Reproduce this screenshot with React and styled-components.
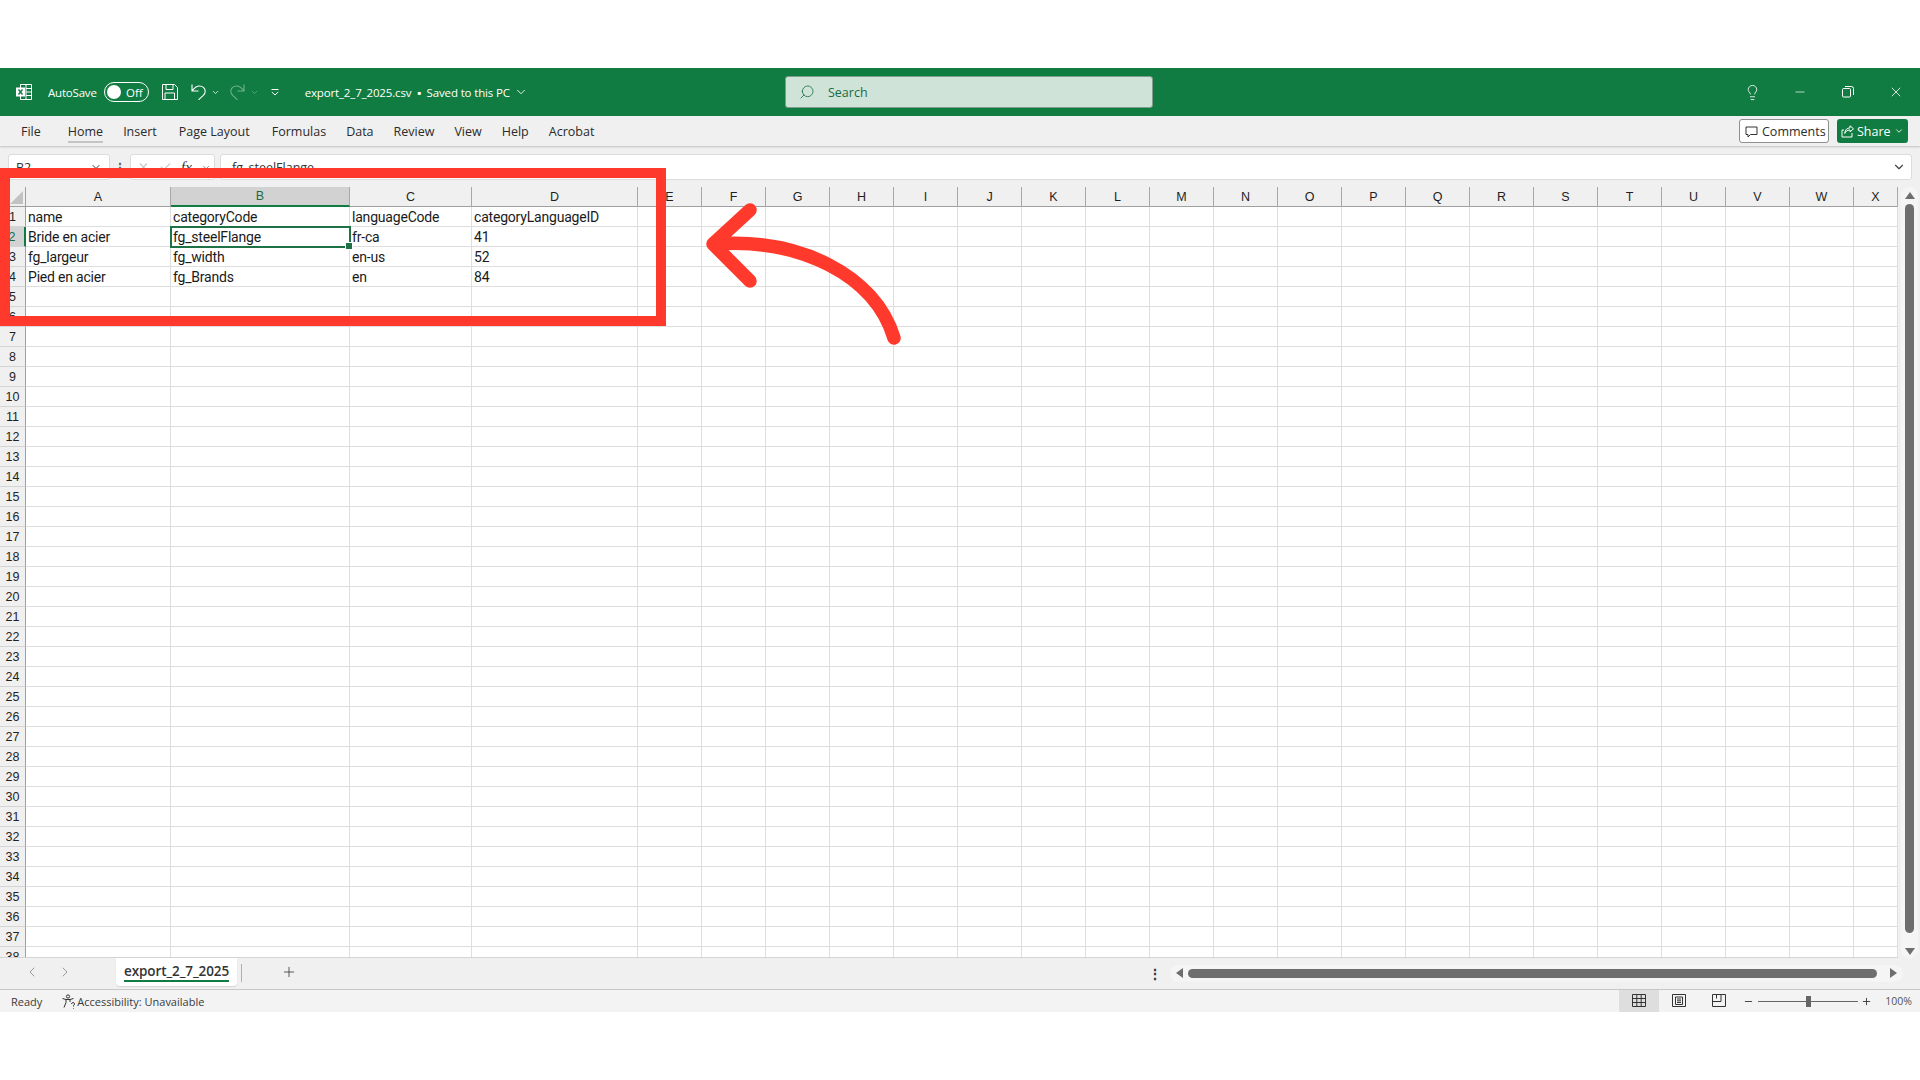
import styled, { createGlobalStyle } from "styled-components";
import { Check, ChevronDown, ChevronLeft, ChevronRight, Lightbulb, Minus, Plus, Search, X } from "lucide-react";

const GlobalStyle = createGlobalStyle`
  * { box-sizing: border-box; }
  html, body { margin: 0; padding: 0; background: #ffffff; }
  body { font-family: "Open Sans", "Noto Sans", sans-serif; }
`;

const GREEN = "#107c41";
const RED = "#ff3a2d";

const Page = styled.div`
  position: relative;
  width: 1920px;
  height: 1080px;
  padding-top: 68px;
  overflow: hidden;
  background: #ffffff;
`;

const Window = styled.div`
  display: flex;
  flex-direction: column;
  height: 944px;
`;

const TitleBar = styled.div`
  display: flex;
  align-items: center;
  height: 48px;
  flex: none;
  padding-left: 16px;
  background: ${GREEN};
  color: #ffffff;
`;

const TitleLeft = styled.div`
  display: flex;
  align-items: center;
  width: 769px;
  flex: none;
`;

const AutoSave = styled.span`
  margin-left: 16px;
  font-size: 11.5px;
  letter-spacing: -0.2px;
`;

const Toggle = styled.span`
  display: flex;
  align-items: center;
  justify-content: space-between;
  width: 45px;
  height: 20px;
  margin-left: 7px;
  padding: 0 5px 0 2px;
  border: 1px solid #ffffff;
  border-radius: 10px;
  font-size: 11.5px;
  &::before {
    content: "";
    width: 14px;
    height: 14px;
    border-radius: 50%;
    background: #ffffff;
  }
`;

const QuickIcon = styled.span`
  display: flex;
  align-items: center;
  gap: ${(p) => p.$inner || 0}px;
  margin-left: ${(p) => p.$gap || 0}px;
  opacity: ${(p) => (p.$dim ? 0.4 : 1)};
`;

const FileName = styled.span`
  display: flex;
  align-items: center;
  gap: 4px;
  margin-left: 26px;
  font-size: 11.5px;
  letter-spacing: -0.15px;
  white-space: nowrap;
`;

const SearchBox = styled.div`
  display: flex;
  align-items: center;
  gap: 13px;
  width: 368px;
  height: 32px;
  padding-left: 13px;
  background: #cfe3d8;
  border: 1px solid #7f9c8c;
  border-radius: 3px;
  color: #1b6b44;
  font-size: 12.5px;
`;

const SearchIcon = styled(Search)`
  transform: scaleX(-1);
`;

const WindowControls = styled.div`
  display: flex;
  align-items: center;
  margin-left: auto;
`;

const ControlIcon = styled.span`
  display: flex;
  justify-content: center;
  width: 48px;
`;

const RestoreIcon = () => (
  <svg width="12" height="12" viewBox="0 0 12 12" fill="none" stroke="#fff" strokeWidth="1">
    <rect x="0.5" y="2.5" width="8" height="8.5" rx="1" />
    <path d="M3 .5h6.5a2 2 0 0 1 2 2V9" />
  </svg>
);

const RibbonBar = styled.div`
  display: flex;
  align-items: center;
  flex: none;
  height: 30px;
  padding: 0 12px 0 21px;
  background: #f0f0f0;
  box-shadow: 0 1px 2px rgba(0, 0, 0, 0.2);
  position: relative;
  font-size: 12.5px;
  color: #2b2b2b;
`;

const TabLabel = styled.span`
  position: relative;
  margin-right: ${(p) => p.$gap}px;
  &::after {
    content: ${(p) => (p.$active ? '""' : "none")};
    position: absolute;
    left: 0;
    right: 0;
    bottom: -3px;
    height: 2px;
    background: #c4c4c4;
  }
`;

const RibbonActions = styled.div`
  display: flex;
  align-items: center;
  gap: 8px;
  margin-left: auto;
`;

const CommentsButton = styled.div`
  display: flex;
  align-items: center;
  gap: 4px;
  width: 90px;
  height: 24px;
  padding-left: 5px;
  background: #ffffff;
  border: 1px solid #8f8f8f;
  border-radius: 3px;
`;

const ShareButton = styled.div`
  display: flex;
  align-items: center;
  gap: 3px;
  width: 71px;
  height: 24px;
  padding-left: 4px;
  background: ${GREEN};
  border-radius: 3px;
  color: #ffffff;
`;

const FormulaBar = styled.div`
  display: flex;
  align-items: center;
  flex: none;
  height: 41px;
  padding: 8px 8px 7px;
  background: #f0f0f0;
`;

const FormulaBox = styled.div`
  display: flex;
  align-items: center;
  height: 26px;
  background: #ffffff;
  border: 1px solid #dcdcdc;
  border-radius: 3px;
  font-size: 12.5px;
  color: #333333;
  width: ${(p) => (p.$width ? `${p.$width}px` : "auto")};
  flex: ${(p) => (p.$width ? "none" : 1)};
  padding: 0 7px;
  justify-content: ${(p) => (p.$between ? "space-between" : "flex-start")};
`;

const FunctionBox = styled(FormulaBox)`
  gap: 9px;
  padding: 0 3px 0 6px;
`;

const FormulaInput = styled(FormulaBox)`
  justify-content: space-between;
  margin-left: 5px;
  padding: 0 5px 0 11px;
`;

const FxLabel = styled.span`
  font-family: "Liberation Serif", serif;
  font-style: italic;
  font-size: 15px;
`;

const Dots = styled.span`
  width: 20px;
  text-align: center;
  font-size: 12px;
  font-weight: 700;
  color: #555555;
`;

const GridArea = styled.div`
  display: flex;
  flex: 1;
  min-height: 0;
  background: #f0f0f0;
`;

const Sheet = styled.div`
  display: grid;
  grid-template-columns: 26px 145px 179px 122px 166px repeat(19, 64px) 44px;
  grid-auto-rows: 20px;
  width: 1898px;
  height: 100%;
  overflow: hidden;
  flex: none;
  align-content: start;
  background: #ffffff;
  border-bottom: 1px solid #d4d4d4;
`;

const Corner = styled.div`
  position: relative;
  background: #f0f0f0;
  border-right: 1px solid #a0a0a0;
  border-bottom: 1px solid #a0a0a0;
  &::after {
    content: "";
    position: absolute;
    right: 2px;
    bottom: 2px;
    border-style: solid;
    border-width: 0 0 13px 13px;
    border-color: transparent transparent #c2c2c2 transparent;
  }
`;

const ColHead = styled.div`
  display: flex;
  align-items: center;
  justify-content: center;
  font-family: "Liberation Sans", Arial, sans-serif;
  font-size: 12.5px;
  background: ${(p) => (p.$active ? "#d2d2d2" : "#f0f0f0")};
  color: ${(p) => (p.$active ? "#1a6b42" : "#1f1f1f")};
  border-right: 1px solid #a8a8a8;
  border-bottom: ${(p) => (p.$active ? `2px solid ${GREEN}` : "1px solid #a0a0a0")};
`;

const RowHead = styled.div`
  display: flex;
  align-items: center;
  justify-content: center;
  font-family: "Liberation Sans", Arial, sans-serif;
  font-size: 12.5px;
  background: ${(p) => (p.$active ? "#d2d2d2" : "#f0f0f0")};
  color: ${(p) => (p.$active ? "#1a6b42" : "#1f1f1f")};
  border-right: ${(p) => (p.$active ? `2px solid ${GREEN}` : "1px solid #a0a0a0")};
  border-bottom: 1px solid #d4d4d4;
`;

const Cell = styled.div`
  position: relative;
  display: flex;
  align-items: center;
  padding-left: 2px;
  overflow: visible;
  white-space: nowrap;
  font-family: Roboto, "Liberation Sans", Arial, sans-serif;
  font-size: 14px;
  letter-spacing: -0.2px;
  color: #1a1a1a;
  border-right: 1px solid #dedede;
  border-bottom: 1px solid #dedede;
  ${(p) =>
    p.$selected &&
    `
    outline: 2px solid #1f7246;
    outline-offset: -1px;
    z-index: 1;
    &::after {
      content: "";
      position: absolute;
      right: -4px;
      bottom: -4px;
      width: 6px;
      height: 6px;
      background: #1f7246;
      border: 1px solid #ffffff;
    }
  `}
`;

const VScroll = styled.div`
  display: flex;
  flex-direction: column;
  align-items: center;
  width: 17px;
  flex: none;
  margin: 0 2px 0 3px;
  padding: 5px 0 3px;
  background: #f5f5f5;
  border-radius: 9px;
`;

const ArrowUp = styled.span`
  width: 0;
  height: 0;
  border-left: 5px solid transparent;
  border-right: 5px solid transparent;
  border-bottom: 7px solid #6e6e6e;
`;

const ArrowDown = styled.span`
  width: 0;
  height: 0;
  margin-top: auto;
  border-left: 5px solid transparent;
  border-right: 5px solid transparent;
  border-top: 7px solid #6e6e6e;
`;

const VThumb = styled.div`
  width: 9px;
  height: 729px;
  margin-top: 5px;
  background: #6e6e6e;
  border-radius: 5px;
`;

const TabBar = styled.div`
  display: flex;
  align-items: flex-start;
  flex: none;
  height: 32px;
  background: #f0f0f0;
  border-bottom: 1px solid #c8c8c8;
`;

const SheetNav = styled.div`
  display: flex;
  align-items: center;
  gap: 17px;
  width: 116px;
  height: 28px;
  padding-left: 24px;
  color: #9a9a9a;
`;

const SheetTab = styled.div`
  display: flex;
  align-items: center;
  justify-content: center;
  width: 121px;
  height: 28px;
  background: #ffffff;
  border-radius: 0 0 4px 4px;
  box-shadow: 0 1px 1px rgba(0, 0, 0, 0.12);
`;

const SheetTabLabel = styled.span`
  border-bottom: 2px solid ${GREEN};
  font-size: 13.5px;
  line-height: 17px;
  font-weight: 600;
  color: #333333;
  letter-spacing: -0.1px;
`;

const TabSep = styled.span`
  width: 1px;
  height: 18px;
  margin: 6px 0 0 4px;
  background: #b0b0b0;
`;

const AddSheet = styled.span`
  display: flex;
  margin: 6px 0 0 39px;
  color: #333333;
`;

const HScrollWrap = styled.div`
  display: flex;
  align-items: center;
  height: 24px;
  margin: 3px 17px 0 auto;
  color: #333333;
`;

const TabMenu = styled.span`
  margin-right: 8px;
  font-size: 14px;
  font-weight: 700;
`;

const HRail = styled.div`
  display: flex;
  align-items: center;
  width: 733px;
  height: 17px;
  padding: 0 6px;
  background: #f5f5f5;
  border-radius: 9px;
`;

const ArrowLeft = styled.span`
  width: 0;
  height: 0;
  border-top: 5px solid transparent;
  border-bottom: 5px solid transparent;
  border-right: 7px solid #6e6e6e;
`;

const ArrowRight = styled.span`
  width: 0;
  height: 0;
  border-top: 5px solid transparent;
  border-bottom: 5px solid transparent;
  border-left: 7px solid #6e6e6e;
`;

const HThumb = styled.div`
  width: 689px;
  height: 9px;
  margin: 0 13px 0 5px;
  background: #6e6e6e;
  border-radius: 5px;
`;

const StatusBar = styled.div`
  display: flex;
  align-items: center;
  flex: none;
  height: 22px;
  padding-left: 11px;
  background: #f3f3f3;
  font-size: 11px;
  color: #3a3a3a;
`;

const Accessibility = styled.span`
  display: flex;
  align-items: center;
  gap: 1px;
  margin-left: 19px;
`;

const StatusRight = styled.div`
  display: flex;
  align-items: center;
  height: 100%;
  margin-left: auto;
`;

const ViewBtn = styled.span`
  display: flex;
  align-items: center;
  justify-content: center;
  width: 40px;
  height: 100%;
  background: ${(p) => (p.$active ? "#dedede" : "transparent")};
`;

const ZoomMinus = styled(Minus)`
  margin-left: 4px;
`;

const ZoomSlider = styled.div`
  position: relative;
  width: 100px;
  height: 1px;
  margin: 0 3px 0 4px;
  background: #666666;
  &::after {
    content: "";
    position: absolute;
    left: 48px;
    top: -5px;
    width: 5px;
    height: 11px;
    background: #666666;
  }
`;

const ZoomPct = styled.span`
  margin: 0 8px 0 13px;
  font-size: 10.5px;
  color: #555555;
`;

const RedBox = styled.div`
  position: absolute;
  left: 0;
  top: 168px;
  width: 666px;
  height: 158px;
  border: 10px solid ${RED};
  pointer-events: none;
  z-index: 3;
`;

const ArrowOverlay = styled.svg`
  position: absolute;
  left: 0;
  top: 0;
  width: 1920px;
  height: 1080px;
  pointer-events: none;
  z-index: 3;
`;

const ExcelIcon = () => (
  <svg width="16" height="16" viewBox="0 0 16 16" fill="none">
    <path d="M4.5 .5h11v15h-11z" stroke="#fff" strokeWidth="1" />
    <path d="M10 .5v15M10 4.5h5.5M10 8h5.5M10 11.5h5.5" stroke="#fff" strokeWidth="1" />
    <rect x="0" y="3.5" width="9" height="9" fill="#fff" />
    <path d="M2.5 5.5l4 5M6.5 5.5l-4 5" stroke={GREEN} strokeWidth="1.4" />
  </svg>
);

const SaveIcon = () => (
  <svg width="16" height="16" viewBox="0 0 16 16" fill="none" stroke="#fff" strokeWidth="1">
    <path d="M.5 .5h12l3 3v12H.5zM4 .5v5h7v-5M3 15.5V9h9.5v6.5" />
  </svg>
);

const UndoIcon = ({ flip }) => (
  <svg width="15" height="16" viewBox="0 0 15 16" fill="none" stroke="#fff" strokeWidth="1.1" transform={flip ? "scale(-1 1)" : undefined}>
    <path d="M1 .5v6.5h6.5M1 7C3.5 3.5 6 2 8.5 2c3.5 0 5.7 2.5 5.7 5.2 0 1.7-.8 3-1.9 4.1L7.5 15.8" />
  </svg>
);

const CustomizeIcon = () => (
  <svg width="8" height="7" viewBox="0 0 8 7" fill="none" stroke="#fff" strokeWidth="1">
    <path d="M.5 .5h7M.8 3l3.2 3 3.2-3" />
  </svg>
);

const CommentIcon = () => (
  <svg width="13" height="13" viewBox="0 0 13 13" fill="none" stroke="#333" strokeWidth="1">
    <path d="M1 2h11v7.5H5.5L3 12V9.5H1z" />
  </svg>
);

const ShareIcon = () => (
  <svg width="13" height="13" viewBox="0 0 13 13" fill="none" stroke="#fff" strokeWidth="1">
    <path d="M9 .8l3.5 3L9 6.8V5C6 5 4.5 6.5 3.8 8.5 3.8 5 6 3 9 2.8z" />
    <path d="M11 8v4H1V5h2" />
  </svg>
);

const AccessIcon = () => (
  <svg width="15" height="15" viewBox="0 0 15 15" fill="none" stroke="#333" strokeWidth="1">
    <circle cx="7" cy="2.5" r="1.6" />
    <path d="M1.5 4.5l3.5 1h4l3.5-1M5 5.5v3L3 13.5M9 5.5V8" />
    <path d="M10.5 10a1.5 1.5 0 1 1 2 1.5v1M12.5 14v.6" />
  </svg>
);

const GridViewIcon = () => (
  <svg width="14" height="14" viewBox="0 0 14 14" fill="none" stroke="#333" strokeWidth="1">
    <path d="M.5 .5h13v12h-13zM.5 4.5h13M.5 8.5h13M4.8 .5v12M9.2 .5v12" />
  </svg>
);

const PageViewIcon = () => (
  <svg width="14" height="14" viewBox="0 0 14 14" fill="none" stroke="#333" strokeWidth="1">
    <path d="M.5 .5h13v12h-13zM3.5 3h7v7.5h-7zM5 5h4M5 6.8h4M5 8.5h4" />
  </svg>
);

const BreakViewIcon = () => (
  <svg width="14" height="14" viewBox="0 0 14 14" fill="none" stroke="#333" strokeWidth="1">
    <path d="M.5 .5h13v12h-13zM.5 7.5h8.5v-7M4.5 .5v4" />
  </svg>
);

const COLUMNS = "ABCDEFGHIJKLMNOPQRSTUVWX".split("");

const DATA = {
  1: ["name", "categoryCode", "languageCode", "categoryLanguageID"],
  2: ["Bride en acier", "fg_steelFlange", "fr-ca", "41"],
  3: ["fg_largeur", "fg_width", "en-us", "52"],
  4: ["Pied en acier", "fg_Brands", "en", "84"],
};

const TABS = [
  ["File", 27],
  ["Home", 20],
  ["Insert", 22],
  ["Page Layout", 22],
  ["Formulas", 20],
  ["Data", 20],
  ["Review", 20],
  ["View", 20],
  ["Help", 20],
  ["Acrobat", 0],
];

const App = () => {
  const rows = Array.from({ length: 38 }, (_, i) => i + 1);
  return (
    <>
      <GlobalStyle />
      <Page>
        <Window>
          <TitleBar>
            <TitleLeft>
              <ExcelIcon />
              <AutoSave>AutoSave</AutoSave>
              <Toggle>Off</Toggle>
              <QuickIcon $gap={13}>
                <SaveIcon />
              </QuickIcon>
              <QuickIcon $gap={13} $inner={5}>
                <UndoIcon />
                <ChevronDown size={9} strokeWidth={2} />
              </QuickIcon>
              <QuickIcon $gap={10} $inner={5} $dim>
                <UndoIcon flip />
                <ChevronDown size={9} strokeWidth={2} />
              </QuickIcon>
              <QuickIcon $gap={12}>
                <CustomizeIcon />
              </QuickIcon>
              <FileName>
                export_2_7_2025.csv &nbsp;▪&nbsp; Saved to this PC
                <ChevronDown size={14} strokeWidth={1.5} />
              </FileName>
            </TitleLeft>
            <SearchBox>
              <SearchIcon size={16} strokeWidth={1.2} />
              Search
            </SearchBox>
            <WindowControls>
              <ControlIcon>
                <Lightbulb size={17} strokeWidth={1.2} />
              </ControlIcon>
              <ControlIcon>
                <Minus size={14} strokeWidth={1.2} />
              </ControlIcon>
              <ControlIcon>
                <RestoreIcon />
              </ControlIcon>
              <ControlIcon>
                <X size={16} strokeWidth={1.2} />
              </ControlIcon>
            </WindowControls>
          </TitleBar>
          <RibbonBar>
            {TABS.map(([label, gap]) => (
              <TabLabel key={label} $gap={gap} $active={label === "Home"}>
                {label}
              </TabLabel>
            ))}
            <RibbonActions>
              <CommentsButton>
                <CommentIcon />
                Comments
              </CommentsButton>
              <ShareButton>
                <ShareIcon />
                Share
                <ChevronDown size={10} />
              </ShareButton>
            </RibbonActions>
          </RibbonBar>
          <FormulaBar>
            <FormulaBox $width={102} $between>
              B2
              <ChevronDown size={12} />
            </FormulaBox>
            <Dots>⋮</Dots>
            <FunctionBox $width={85}>
              <X size={14} color="#c8c8c8" />
              <Check size={14} color="#c8c8c8" />
              <FxLabel>fx</FxLabel>
              <ChevronDown size={11} color="#777777" />
            </FunctionBox>
            <FormulaInput>
              fg_steelFlange
              <ChevronDown size={14} color="#444444" />
            </FormulaInput>
          </FormulaBar>
          <GridArea>
            <Sheet>
              <Corner />
              {COLUMNS.map((c) => (
                <ColHead key={c} $active={c === "B"}>
                  {c}
                </ColHead>
              ))}
              {rows.map((r) => [
                <RowHead key={`h${r}`} $active={r === 2}>
                  {r}
                </RowHead>,
                ...COLUMNS.map((c, i) => (
                  <Cell key={`${c}${r}`} $selected={r === 2 && c === "B"}>
                    {DATA[r] && DATA[r][i]}
                  </Cell>
                )),
              ])}
            </Sheet>
            <VScroll>
              <ArrowUp />
              <VThumb />
              <ArrowDown />
            </VScroll>
          </GridArea>
          <TabBar>
            <SheetNav>
              <ChevronLeft size={16} strokeWidth={1.5} />
              <ChevronRight size={16} strokeWidth={1.5} />
            </SheetNav>
            <SheetTab>
              <SheetTabLabel>export_2_7_2025</SheetTabLabel>
            </SheetTab>
            <TabSep />
            <AddSheet>
              <Plus size={16} strokeWidth={1.2} />
            </AddSheet>
            <HScrollWrap>
              <TabMenu>⋮</TabMenu>
              <HRail>
                <ArrowLeft />
                <HThumb />
                <ArrowRight />
              </HRail>
            </HScrollWrap>
          </TabBar>
          <StatusBar>
            Ready
            <Accessibility>
              <AccessIcon />
              Accessibility: Unavailable
            </Accessibility>
            <StatusRight>
              <ViewBtn $active>
                <GridViewIcon />
              </ViewBtn>
              <ViewBtn>
                <PageViewIcon />
              </ViewBtn>
              <ViewBtn>
                <BreakViewIcon />
              </ViewBtn>
              <ZoomMinus size={11} />
              <ZoomSlider />
              <Plus size={11} />
              <ZoomPct>100%</ZoomPct>
            </StatusRight>
          </StatusBar>
        </Window>
        <RedBox />
        <ArrowOverlay viewBox="0 0 1920 1080" fill="none">
          <path
            d="M894 338C875 275 800 238 716 244M750 210L713 244L750 281"
            stroke={RED}
            strokeWidth="13.5"
            strokeLinecap="round"
            strokeLinejoin="round"
          />
        </ArrowOverlay>
      </Page>
    </>
  );
};

export default App;
